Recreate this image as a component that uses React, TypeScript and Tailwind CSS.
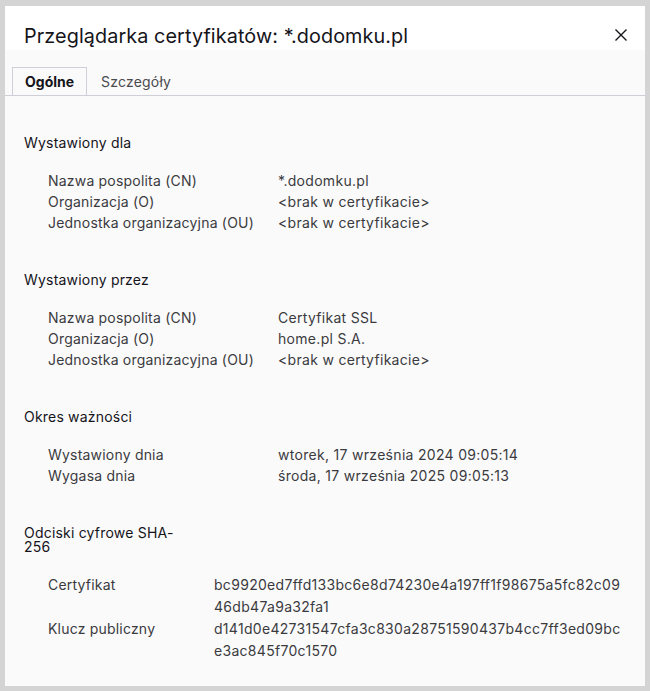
const sections = [
  {
    title: "Wystawiony dla",
    labelWidth: "w-[230px]",
    rowHeight: "leading-[21px]",
    rows: [
      ["Nazwa pospolita (CN)", "*.dodomku.pl"],
      ["Organizacja (O)", "<brak w certyfikacie>"],
      ["Jednostka organizacyjna (OU)", "<brak w certyfikacie>"],
    ],
  },
  {
    title: "Wystawiony przez",
    labelWidth: "w-[230px]",
    rowHeight: "leading-[21px]",
    rows: [
      ["Nazwa pospolita (CN)", "Certyfikat SSL"],
      ["Organizacja (O)", "home.pl S.A."],
      ["Jednostka organizacyjna (OU)", "<brak w certyfikacie>"],
    ],
  },
  {
    title: "Okres ważności",
    labelWidth: "w-[230px]",
    rowHeight: "leading-[21px]",
    rows: [
      ["Wystawiony dnia", "wtorek, 17 września 2024 09:05:14"],
      ["Wygasa dnia", "środa, 17 września 2025 09:05:13"],
    ],
  },
  {
    title: "Odciski cyfrowe SHA-256",
    labelWidth: "w-[166px]",
    rowHeight: "leading-[22px]",
    rows: [
      ["Certyfikat", "bc9920ed7ffd133bc6e8d74230e4a197ff1f98675a5fc82c0946db47a9a32fa1"],
      ["Klucz publiczny", "d141d0e42731547cfa3c830a28751590437b4cc7ff3ed09bce3ac845f70c1570"],
    ],
  },
];

const App = () => {
  return (
    <div className="w-[650px] h-[691px] bg-[#d4d4d4] pt-[6px] pb-[5px] px-[5px] font-['Inter','Liberation_Sans',sans-serif]">
      <div className="h-full flex flex-col bg-[#fafafa]">
        {/* Header */}
        <div className="h-[44px] bg-white flex items-end justify-between pl-[19px] pr-[17px] pb-[1px]">
          <h1 className="text-[19.8px] leading-[26px] tracking-[0.1px] text-[#15141a]">
            Przeglądarka certyfikatów: *.dodomku.pl
          </h1>
          <button className="mb-[7px] text-[#15141a]" aria-label="Zamknij">
            <svg width="14" height="14" viewBox="0 0 14 14" fill="none" stroke="currentColor" strokeWidth="1.4">
              <path d="M1.5 1.5l11 11M12.5 1.5l-11 11" />
            </svg>
          </button>
        </div>

        {/* Tabs */}
        <div className="pt-[17px] px-[7px] border-b border-[#cfcfd8] flex">
          <div className="h-[28px] -mb-px px-[12px] flex items-center border border-b-0 border-[#cfcfd8] bg-[#fafafa] text-[14px] font-bold text-[#15141a]">
            Ogólne
          </div>
          <div className="h-[28px] px-[14px] flex items-center text-[14px] tracking-[0.2px] text-[#4a4a4f]">
            Szczegóły
          </div>
        </div>

        {/* Content */}
        <div className="flex flex-col gap-[40px] pt-[40px] px-[19px] text-[14px] tracking-[0.2px]">
          {sections.map((s) => (
            <section key={s.title} className="flex flex-col gap-[20px]">
              <h2 className="w-[160px] leading-[14px] text-[#15141a]">{s.title}</h2>
              <div className={`flex flex-col pl-[24px] text-[#3b3b3f] ${s.rowHeight}`}>
                {s.rows.map(([label, value]) => (
                  <div key={label} className="flex">
                    <div className={`${s.labelWidth} shrink-0`}>{label}</div>
                    <div className="flex-1 break-all tracking-[0.3px]">{value}</div>
                  </div>
                ))}
              </div>
            </section>
          ))}
        </div>
      </div>
    </div>
  );
};

export default App;
